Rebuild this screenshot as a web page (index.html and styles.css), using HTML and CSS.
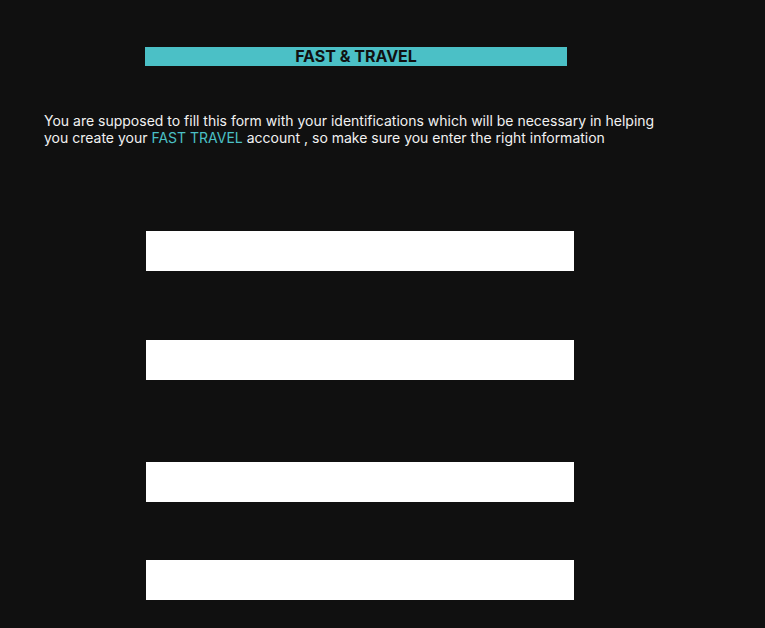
FILE: index.html
```html
<!DOCTYPE html>
<html>
<head>
<meta charset="utf-8">
<link rel="stylesheet" href="styles.css">
</head>
<body>
<div class="page">
  <h1 class="brand">FAST &amp; TRAVEL</h1>
  <p class="intro">You are supposed to fill this form with your identifications which will be necessary in helping you create your <span class="hl">FAST TRAVEL</span> account , so make sure you enter the right information</p>
  <form class="form">
    <input class="field f1" type="text">
    <input class="field f2" type="text">
    <input class="field f3" type="text">
    <input class="field f4" type="text">
  </form>
</div>
</body>
</html>
```
FILE: styles.css
```css
html, body {
  margin: 0;
  padding: 0;
  background: #101010;
  height: 100%;
}
body {
  font-family: Inter, "Noto Sans", sans-serif;
  color: #f2f2f2;
  overflow: hidden;
}
.page {
  padding-top: 47px;
}
.brand {
  margin: 0 0 0 145px;
  width: 422px;
  height: 19px;
  background: #4bc0c6;
  color: #111;
  font-size: 16px;
  font-weight: 700;
  line-height: 19px;
  text-align: center;
}
.intro {
  margin: 46px 0 0 44px;
  width: 622px;
  font-size: 14px;
  line-height: 17px;
}
.hl {
  color: #4bc0c6;
}
.form {
  display: flex;
  flex-direction: column;
  align-items: flex-start;
  padding-left: 146px;
}
.field {
  display: block;
  width: 428px;
  height: 40px;
  box-sizing: border-box;
  border: none;
  background: #fff;
  padding: 0;
  margin: 0;
}
.f1 { margin-top: 85px; }
.f2 { margin-top: 69px; }
.f3 { margin-top: 82px; }
.f4 { margin-top: 58px; }
```
